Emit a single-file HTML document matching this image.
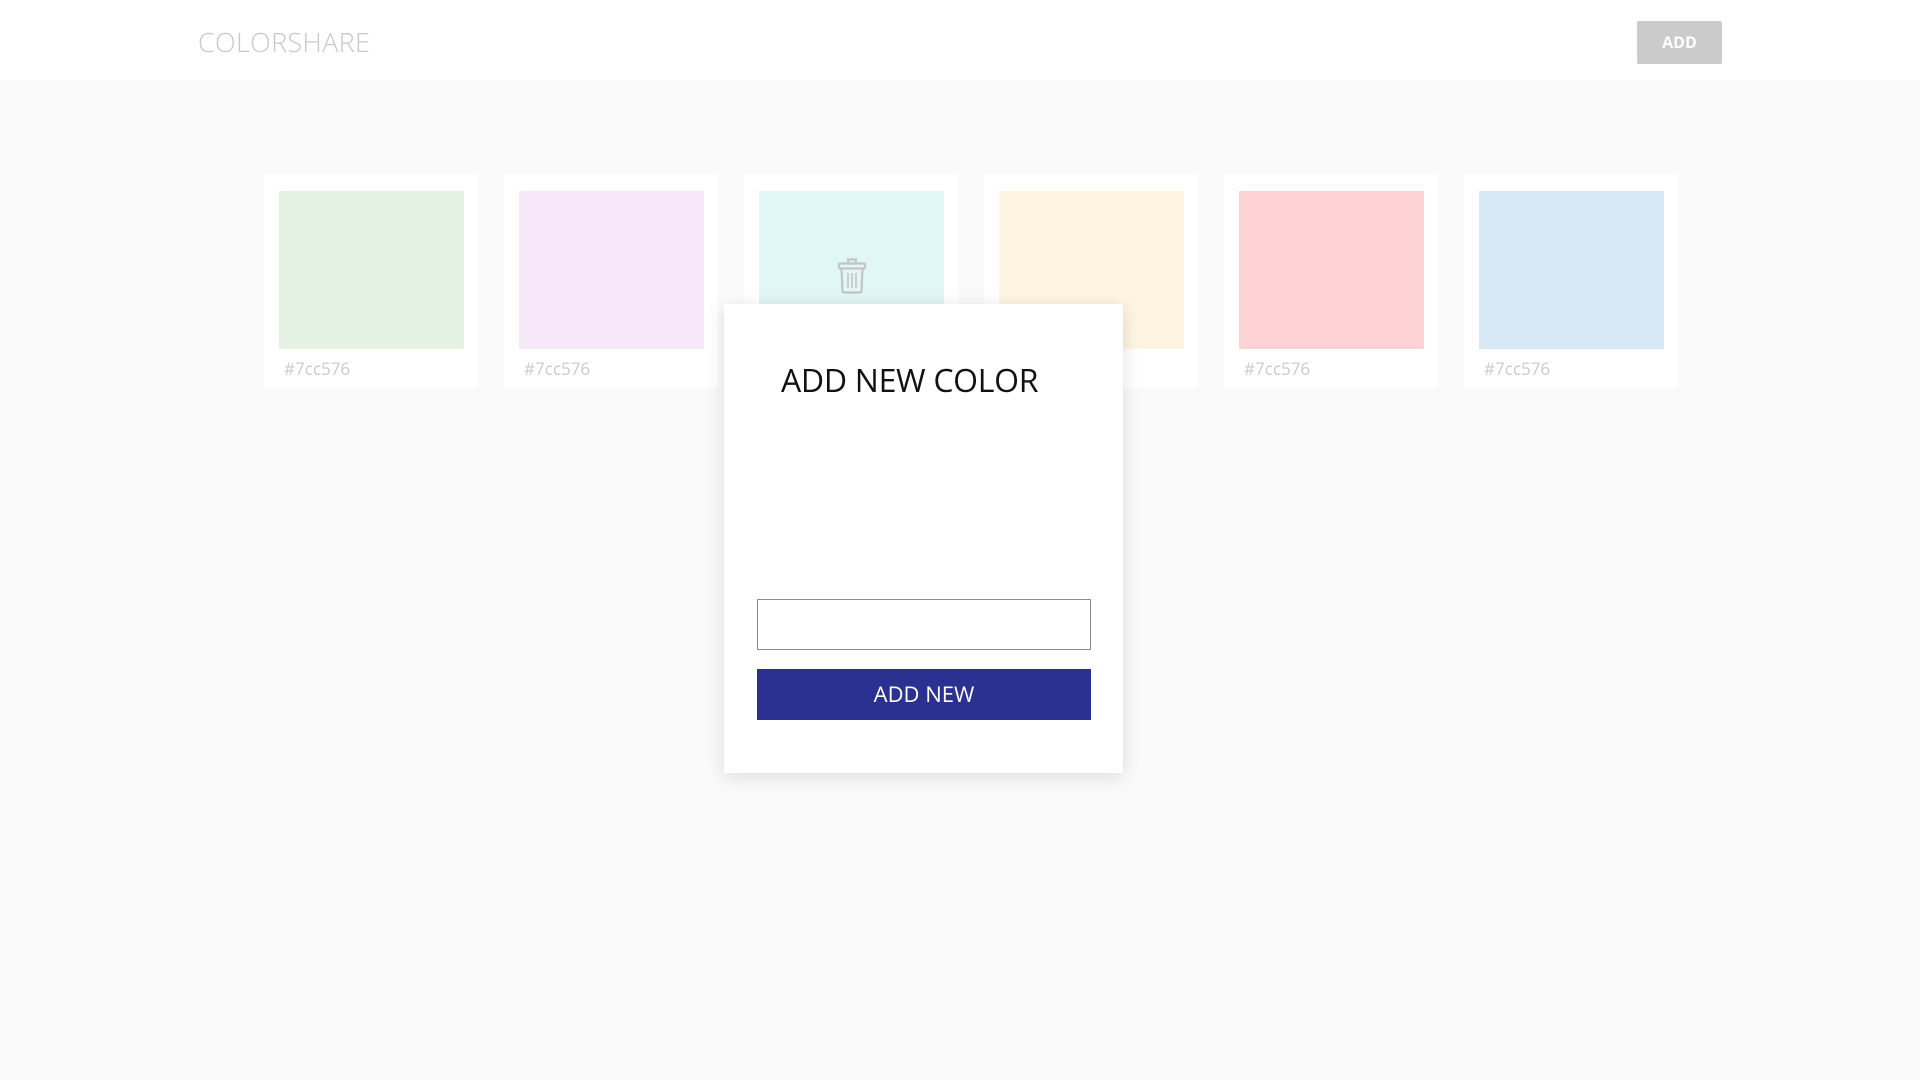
<!DOCTYPE html>
<html><head><meta charset="utf-8"><style>
*{margin:0;padding:0;box-sizing:border-box}
body{width:1920px;height:1080px;background:#fafafa;font-family:"Open Sans","Liberation Sans",sans-serif;position:relative;overflow:hidden}
.hdr{position:absolute;left:0;top:0;width:1920px;height:80px;background:#fff}
.logo{position:absolute;left:198px;top:23px;font-size:27px;color:#c8c8c8;font-weight:300;letter-spacing:0.3px}
.add{position:absolute;left:1637px;top:21px;width:85px;height:43px;background:#cbcbcb;color:#fff;font-weight:bold;font-size:16px;text-align:center;line-height:43px;border-radius:2px}
.card{position:absolute;top:174px;width:214px;height:214px;background:#fff}
.sw{position:absolute;left:15px;top:17px;width:185px;height:158px}
.lbl{position:absolute;left:20px;top:183px;font-size:17px;color:#cbcbcb}
.modal{position:absolute;left:724px;top:304px;width:399px;height:469px;background:#fff;box-shadow:0 4px 18px rgba(0,0,0,0.12)}
.title{position:absolute;left:57px;top:55px;font-size:32px;color:#111;letter-spacing:-0.3px}
.inp{position:absolute;left:33px;top:295px;width:334px;height:51px;border:1px solid #8a8a8a}
.btn{position:absolute;left:33px;top:365px;width:334px;height:51px;background:#2b3190;color:#fff;font-size:22px;text-align:center;line-height:51px}
</style></head><body>
<div class="hdr"><div class="logo">COLORSHARE</div><div class="add">ADD</div></div>
<div class="card" style="left:264px"><div class="sw" style="background:#e4f2e4"></div><div class="lbl">#7cc576</div></div>
<div class="card" style="left:504px"><div class="sw" style="background:#f6e8f8"></div><div class="lbl">#7cc576</div></div>
<div class="card" style="left:744px"><div class="sw" style="background:#e1f7f5">
<svg style="position:absolute;left:78px;top:67px" width="30" height="36" viewBox="0 0 30 36" fill="none" stroke="#c4c4c4" stroke-width="2.2"><rect x="11" y="1.5" width="8" height="4"/><rect x="2" y="5.5" width="26" height="5" rx="1"/><path d="M4.5 10.5 L5.5 33 Q5.5 34.5 7 34.5 L23 34.5 Q24.5 34.5 24.5 33 L25.5 10.5"/><path d="M11 15v15M15 15v15M19 15v15" stroke-width="1.6"/></svg>
</div><div class="lbl">#7cc576</div></div>
<div class="card" style="left:984px"><div class="sw" style="background:#fdf5e1"></div><div class="lbl">#7cc576</div></div>
<div class="card" style="left:1224px"><div class="sw" style="background:#ffd2d4"></div><div class="lbl">#7cc576</div></div>
<div class="card" style="left:1464px"><div class="sw" style="background:#d8e7f4"></div><div class="lbl">#7cc576</div></div>
<div class="modal"><div class="title">ADD NEW COLOR</div><div class="inp"></div><div class="btn">ADD NEW</div></div>
</body></html>
